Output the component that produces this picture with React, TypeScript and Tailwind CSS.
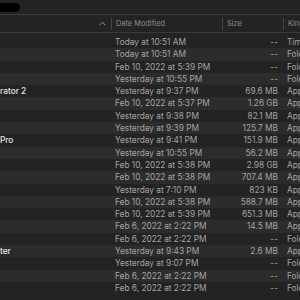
const ROWS = [
  { name: "", date: "Today at 10:51 AM", size: "--", kind: "Time Machine Backup" },
  { name: "", date: "Today at 10:51 AM", size: "--", kind: "Folder" },
  { name: "", date: "Feb 10, 2022 at 5:39 PM", size: "--", kind: "Folder" },
  { name: "", date: "Yesterday at 10:55 PM", size: "--", kind: "Folder" },
  { name: "rator 2", date: "Yesterday at 9:37 PM", size: "69.6 MB", kind: "Application" },
  { name: "", date: "Feb 10, 2022 at 5:37 PM", size: "1.26 GB", kind: "Application" },
  { name: "", date: "Yesterday at 9:38 PM", size: "82.1 MB", kind: "Application" },
  { name: "", date: "Yesterday at 9:39 PM", size: "125.7 MB", kind: "Application" },
  { name: "Pro", date: "Yesterday at 9:41 PM", size: "151.9 MB", kind: "Application" },
  { name: "", date: "Yesterday at 10:55 PM", size: "56.2 MB", kind: "Application" },
  { name: "", date: "Feb 10, 2022 at 5:38 PM", size: "2.98 GB", kind: "Application" },
  { name: "", date: "Feb 10, 2022 at 5:38 PM", size: "707.4 MB", kind: "Application" },
  { name: "", date: "Yesterday at 7:10 PM", size: "823 KB", kind: "Application" },
  { name: "", date: "Feb 10, 2022 at 5:38 PM", size: "588.7 MB", kind: "Application" },
  { name: "", date: "Feb 10, 2022 at 5:39 PM", size: "651.3 MB", kind: "Application" },
  { name: "", date: "Feb 6, 2022 at 2:22 PM", size: "14.5 MB", kind: "Application" },
  { name: "", date: "Feb 6, 2022 at 2:22 PM", size: "--", kind: "Folder" },
  { name: "ter", date: "Yesterday at 9:43 PM", size: "2.6 MB", kind: "Application" },
  { name: "", date: "Yesterday at 9:07 PM", size: "--", kind: "Folder" },
  { name: "", date: "Feb 6, 2022 at 2:22 PM", size: "--", kind: "Folder" },
  { name: "", date: "Feb 6, 2022 at 2:22 PM", size: "--", kind: "Folder" },
];

function HeaderCell({ label }: { label: string }) {
  return (
    <div className="flex items-center min-w-0">
      <div className="w-px h-[12px] bg-[#454545] shrink-0" />
      <span className="ml-[4px] whitespace-nowrap">{label}</span>
    </div>
  );
}

export default function App() {
  return (
    <div className="w-[300px] h-[300px] overflow-hidden bg-[#232323] font-['Inter',sans-serif] antialiased">
      {/* toolbar strip, mostly cropped */}
      <div className="h-[15px] border-b border-[#3a3a3a] pt-[3px]">
        <div className="h-[9px] w-[20px] bg-black rounded-r-full" />
      </div>

      {/* column headers */}
      <div className="h-[18px] grid grid-cols-[111px_111px_61px_1fr] items-center border-b border-[#3a3a3a] text-[7.4px] text-[#8c8c8c] overflow-hidden">
        <div className="flex justify-end pr-[5px]">
          <svg width="7" height="5" viewBox="0 0 7 5" fill="none">
            <path d="M0.8 4.2 L3.5 1.2 L6.2 4.2" stroke="#8c8c8c" strokeWidth="1" />
          </svg>
        </div>
        <HeaderCell label="Date Modified" />
        <HeaderCell label="Size" />
        <HeaderCell label="Kind" />
      </div>

      {/* file rows */}
      <div className="pt-[3px] text-[8.3px]">
        {ROWS.map((r, i) => (
          <div
            key={i}
            className={`h-[12.3px] grid grid-cols-[111px_111px_61px_1fr] items-center overflow-hidden ${
              i % 2 === 0 ? "bg-[#232323]" : "bg-[#2c2c2c]"
            }`}
          >
            <div className="text-[#e4e4e4] font-medium whitespace-nowrap">{r.name}</div>
            <div className="pl-[4px] text-[#a4a4a4] whitespace-nowrap">{r.date}</div>
            <div className="pr-[5px] text-right text-[#a4a4a4] whitespace-nowrap">{r.size}</div>
            <div className="pl-[4px] text-[#a4a4a4] whitespace-nowrap overflow-hidden">{r.kind}</div>
          </div>
        ))}
      </div>
    </div>
  );
}
